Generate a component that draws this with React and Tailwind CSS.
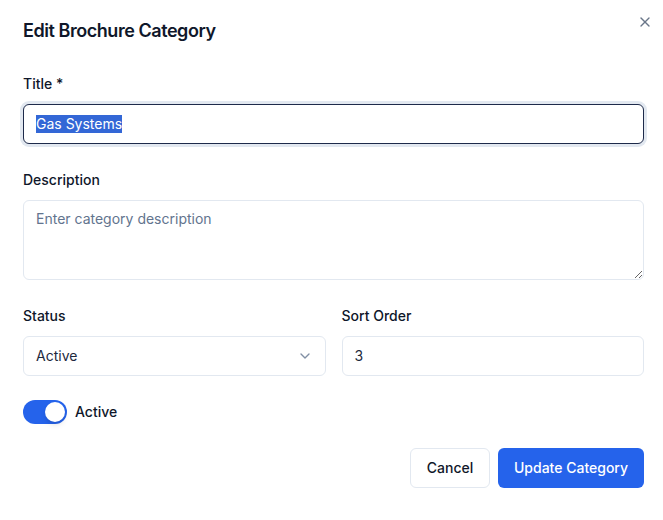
import { X, ChevronDown } from 'lucide-react';

export default function App() {
  return (
    <div
      className="relative w-[663px] h-[520px] bg-white pl-[23px] pr-[19px] pt-[17px] text-[#0f172a]"
      style={{ fontFamily: 'Inter, "Noto Sans", sans-serif' }}
    >
      <button className="absolute right-[10px] top-[14px] text-slate-600 opacity-80">
        <X size={16} strokeWidth={2} />
      </button>

      <h2 className="text-lg leading-7 font-semibold tracking-tight">Edit Brochure Category</h2>

      <div className="mt-[27px] space-y-6">
        {/* Title */}
        <div>
          <label className="block h-6 text-sm leading-6 font-medium mb-2">Title *</label>
          <div className="h-10 rounded-md border border-[#1e2a4a] ring-[3px] ring-slate-200 bg-white px-3 flex items-center text-sm">
            <span className="bg-[#3367d6] text-white leading-[18px]">Gas Systems</span>
          </div>
        </div>

        {/* Description */}
        <div>
          <label className="block h-6 text-sm leading-6 font-medium mb-2">Description</label>
          <textarea
            className="block w-full h-20 rounded-md border border-slate-200 px-3 py-2 text-sm leading-5 placeholder:text-slate-500 outline-none"
            placeholder="Enter category description"
          />
        </div>

        {/* Status / Sort order */}
        <div className="grid grid-cols-2 gap-4">
          <div>
            <label className="block h-6 text-sm leading-6 font-medium mb-2">Status</label>
            <div className="h-10 rounded-md border border-slate-200 px-3 flex items-center justify-between text-sm text-slate-800">
              <span>Active</span>
              <ChevronDown size={16} className="text-slate-500 opacity-80" />
            </div>
          </div>
          <div>
            <label className="block h-6 text-sm leading-6 font-medium mb-2">Sort Order</label>
            <div className="h-10 rounded-md border border-slate-200 px-3 flex items-center text-sm text-slate-800">
              3
            </div>
          </div>
        </div>

        {/* Toggle */}
        <div className="flex items-center gap-2">
          <div className="w-11 h-6 rounded-full bg-[#2563eb] p-[2px] flex justify-end">
            <div className="w-5 h-5 rounded-full bg-white shadow-md" />
          </div>
          <span className="text-sm font-medium">Active</span>
        </div>

        {/* Actions */}
        <div className="flex justify-end gap-2">
          <button className="h-10 w-20 rounded-md border border-slate-200 bg-white text-sm font-medium">
            Cancel
          </button>
          <button className="h-10 w-[146px] whitespace-nowrap rounded-md bg-[#2563eb] text-white text-sm font-medium">
            Update Category
          </button>
        </div>
      </div>
    </div>
  );
}
